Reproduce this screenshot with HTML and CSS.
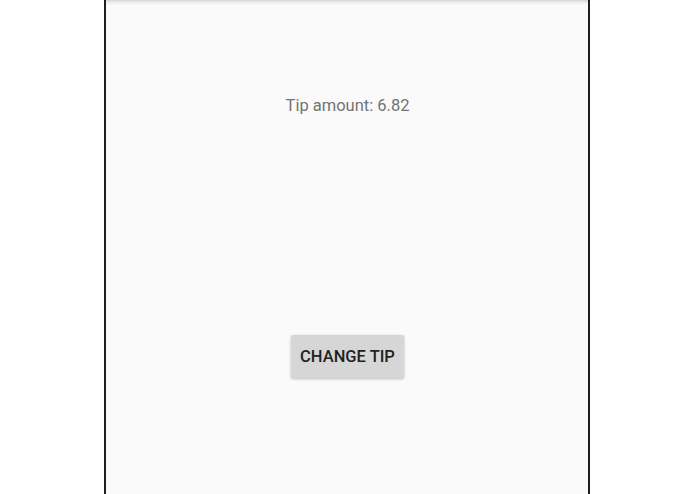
FILE: index.html
```html
<!DOCTYPE html>
<html lang="en">
<head>
    <meta charset="UTF-8">
    <title>Tip Calculator</title>
    <link rel="stylesheet" href="styles.css">
</head>
<body>
    <div class="device">
        <div class="appbar"></div>
        <div class="content">
            <p class="tip-label">Tip amount: 6.82</p>
            <button class="change-btn">CHANGE TIP</button>
        </div>
    </div>
</body>
</html>
```

FILE: styles.css
```css
body {
    margin: 0;
    background: #ffffff;
    font-family: Roboto, 'Noto Sans', sans-serif;
    display: flex;
    justify-content: center;
    height: 494px;
    overflow: hidden;
}

.device {
    width: 482px;
    margin-left: -2px;
    height: 494px;
    background: #fafafa;
    border-left: 2px solid #1e1e1e;
    border-right: 2px solid #1e1e1e;
    display: flex;
    flex-direction: column;
}

.appbar {
    height: 1px;
    background: #d8d8d8;
    box-shadow: 0 1px 3px rgba(0,0,0,0.28);
}

.content {
    display: flex;
    flex-direction: column;
    align-items: center;
    padding-left: 2px;
}

.tip-label {
    margin: 95px 0 0;
    font-size: 16.5px;
    line-height: 20px;
    color: #737373;
}

.change-btn {
    margin-top: 219px;
    width: 113px;
    height: 43px;
    border: none;
    border-radius: 2px;
    background: #d6d6d6;
    color: #212121;
    font-family: Roboto, sans-serif;
    font-weight: 500;
    font-size: 16.5px;
    box-shadow: 0 1px 3px rgba(0,0,0,0.25);
    padding: 0;
}
```
